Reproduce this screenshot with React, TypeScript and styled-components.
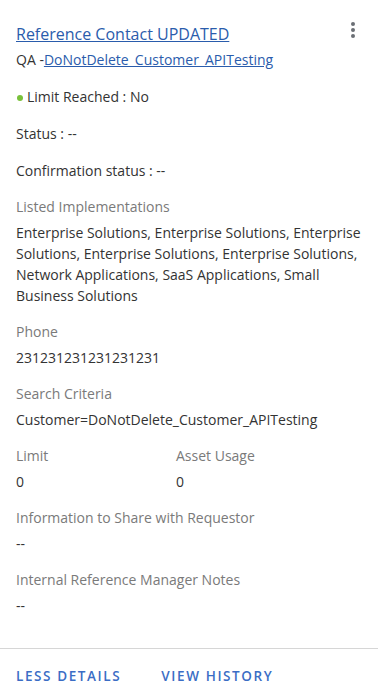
import React from "react";
import styled, { createGlobalStyle } from "styled-components";

const Global = createGlobalStyle`
  html, body { margin: 0; padding: 0; background: #fff; }
  body { font-family: "Open Sans", "Noto Sans", sans-serif; }
  * { box-sizing: border-box; }
`;

const Card = styled.div`
  width: 378px;
  background: #fff;
  padding-top: 22px;
`;

const Body = styled.div`
  padding: 0 16px;
`;

const HeaderRow = styled.div`
  display: flex;
  justify-content: space-between;
  align-items: flex-start;
`;

const Title = styled.a`
  font-size: 16px;
  line-height: 24px;
  color: #2a5cac;
  text-decoration: underline;
`;

const MenuButton = styled.button`
  border: none;
  background: none;
  padding: 0;
  margin: 0 4px 0 0;
  width: 10px;
  height: 16px;
  display: flex;
  flex-direction: column;
  align-items: center;
  justify-content: space-between;
`;

const Dot = styled.span`
  width: 4px;
  height: 4px;
  border-radius: 50%;
  background: #6b6f75;
`;

const SubLine = styled.div`
  font-size: 14px;
  line-height: 20px;
  color: #333;
  margin-top: 4px;
`;

const SubLink = styled.a`
  color: #2a5cac;
  text-decoration: underline;
`;

const StatusLine = styled.div`
  display: flex;
  align-items: center;
  font-size: 14px;
  line-height: 20px;
  color: #333;
  margin-top: 17px;
  margin-bottom: 1px;
`;

const GreenDot = styled.span`
  width: 6px;
  height: 6px;
  border-radius: 50%;
  background: #79c13a;
  margin: 1px 4px 0 1px;
`;

const PlainLine = styled.div`
  font-size: 14px;
  line-height: 20px;
  color: #333;
  margin-top: 17px;
`;

const Field = styled.div`
  margin-top: 16px;
`;

const Label = styled.div`
  font-size: 14px;
  line-height: 20px;
  color: #7a7a7a;
`;

const Value = styled.div`
  font-size: 14px;
  line-height: 21px;
  color: #333;
  margin-top: 5px;
`;

const TwoCol = styled.div`
  display: grid;
  grid-template-columns: 160px 1fr;
`;

const Divider = styled.div`
  height: 1px;
  background: #d6d6d6;
  margin-top: 32px;
`;

const Footer = styled.div`
  display: flex;
  gap: 40px;
  padding: 17px 16px 0;
`;

const FooterButton = styled.button`
  border: none;
  background: none;
  padding: 0;
  font-family: "Open Sans", "Noto Sans", sans-serif;
  font-size: 13.5px;
  font-weight: 600;
  letter-spacing: 1.6px;
  line-height: 20px;
  color: #3b6dc5;
  text-transform: uppercase;
  cursor: pointer;
`;

export default function App() {
  return (
    <>
      <Global />
      <Card>
        <Body>
          <HeaderRow>
            <Title href="#">Reference Contact UPDATED</Title>
            <MenuButton aria-label="More">
              <Dot />
              <Dot />
              <Dot />
            </MenuButton>
          </HeaderRow>
          <SubLine>
            QA -<SubLink href="#">DoNotDelete_Customer_APITesting</SubLink>
          </SubLine>
          <StatusLine>
            <GreenDot />
            Limit Reached : No
          </StatusLine>
          <PlainLine>Status : --</PlainLine>
          <PlainLine>Confirmation status : --</PlainLine>
          <Field>
            <Label>Listed Implementations</Label>
            <Value>
              Enterprise Solutions, Enterprise Solutions, Enterprise Solutions,
              Enterprise Solutions, Enterprise Solutions, Network Applications,
              SaaS Applications, Small Business Solutions
            </Value>
          </Field>
          <Field>
            <Label>Phone</Label>
            <Value>231231231231231231</Value>
          </Field>
          <Field>
            <Label>Search Criteria</Label>
            <Value>Customer=DoNotDelete_Customer_APITesting</Value>
          </Field>
          <Field>
            <TwoCol>
              <div>
                <Label>Limit</Label>
                <Value>0</Value>
              </div>
              <div>
                <Label>Asset Usage</Label>
                <Value>0</Value>
              </div>
            </TwoCol>
          </Field>
          <Field>
            <Label>Information to Share with Requestor</Label>
            <Value>--</Value>
          </Field>
          <Field>
            <Label>Internal Reference Manager Notes</Label>
            <Value>--</Value>
          </Field>
        </Body>
        <Divider />
        <Footer>
          <FooterButton>Less Details</FooterButton>
          <FooterButton>View History</FooterButton>
        </Footer>
      </Card>
    </>
  );
}
